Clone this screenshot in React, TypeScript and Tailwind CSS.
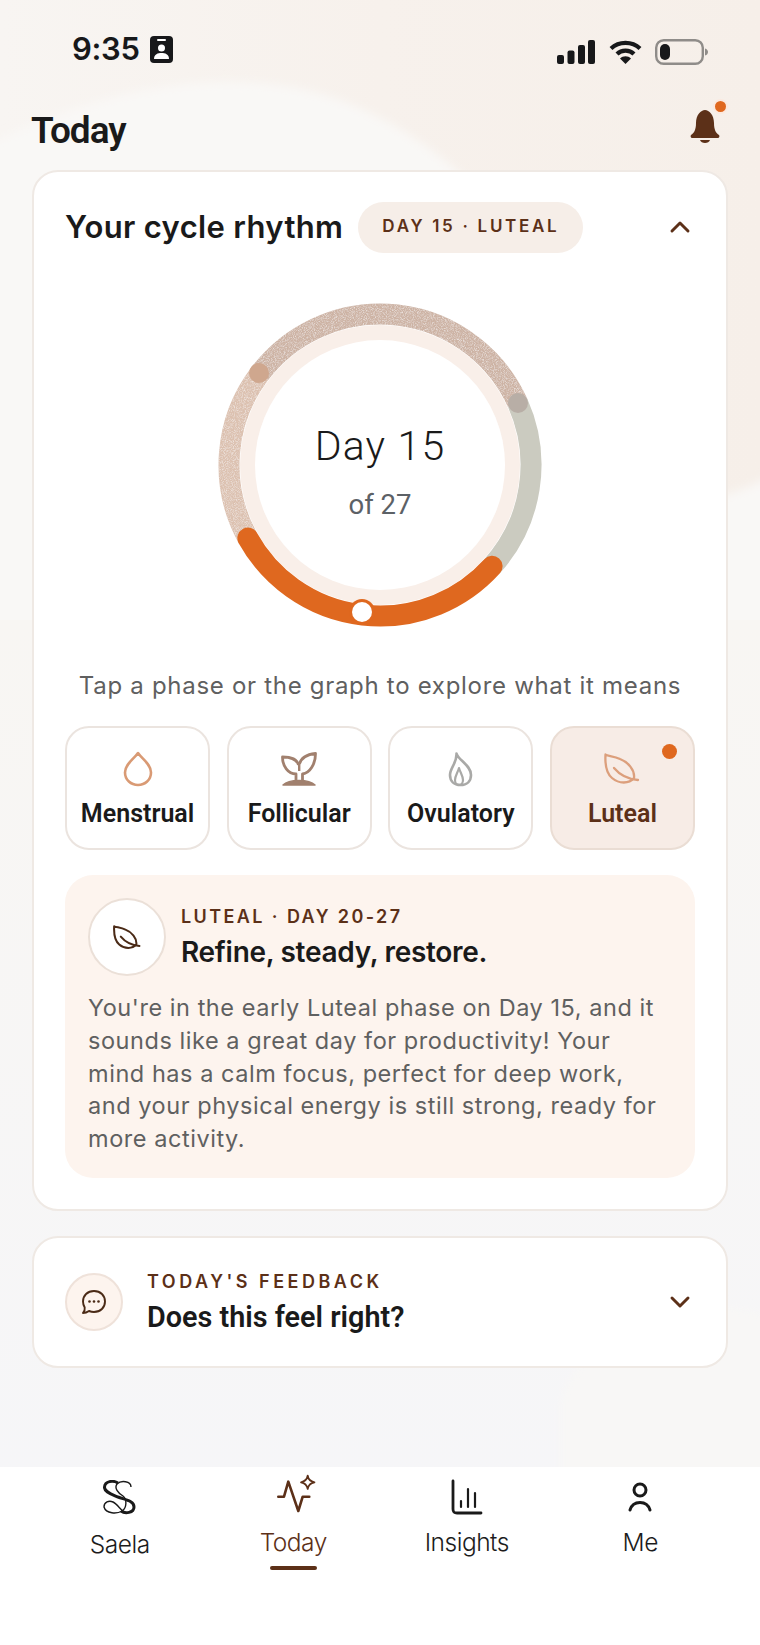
import { ChevronDown, ChevronUp } from "lucide-react";

const BROWN = "#5c3018";
const sans = "font-['Inter','Liberation_Sans',sans-serif]";
const grotesk = "font-['Roboto','Liberation_Sans',sans-serif]";

// point on the ring, x/y are offsets from the centre of the 340 box
const CX = 170;
const CY = 170;
const R = 151;
const norm = (x: number, y: number) => {
  const l = Math.hypot(x, y);
  return [CX + (x / l) * R, CY + (y / l) * R];
};
const arc = (from: [number, number], to: [number, number]) => {
  const a = norm(from[0], from[1]);
  const b = norm(to[0], to[1]);
  return `M${a[0]} ${a[1]}A${R} ${R} 0 0 1 ${b[0]} ${b[1]}`;
};

const Ring = () => (
  <svg width="340" height="340" viewBox="0 0 340 340" className="block">
    <defs>
      <filter id="grain" filterUnits="userSpaceOnUse" x="0" y="0" width="340" height="340">
        <feTurbulence type="fractalNoise" baseFrequency="1.1" numOctaves="2" seed="4" result="n" />
        <feColorMatrix in="n" type="matrix" values="0 0 0 0 1  0 0 0 0 1  0 0 0 0 1  0 0 0 1.2 -0.5" result="w" />
        <feComposite in="w" in2="SourceGraphic" operator="in" result="c" />
        <feMerge>
          <feMergeNode in="SourceGraphic" />
          <feMergeNode in="c" />
        </feMerge>
      </filter>
    </defs>
    <g fill="none">
      <path d={arc([-132, 73], [-121, -92])} stroke="#dcc1b0" strokeWidth="21" filter="url(#grain)" />
      <path d={arc([-121, -92], [138, -62])} stroke="#cdb3a4" strokeWidth="21" filter="url(#grain)" />
      <path d={arc([138, -62], [113, 102])} stroke="#cbcbc0" strokeWidth="21" />
    </g>
    <circle cx={CX} cy={CY} r="140" fill="#f9efe9" />
    <circle cx={CX} cy={CY} r="125" fill="#ffffff" />
    <circle cx="49" cy="78" r="10" fill="#cfa78e" />
    <circle cx="308" cy="108" r="10" fill="#b8aea6" />
    <path d={arc([113, 102], [-132, 73])} fill="none" stroke="#df681f" strokeWidth="21" strokeLinecap="round" />
    <circle cx="152" cy="317" r="13" fill="#df681f" />
    <circle cx="152" cy="317" r="10" fill="#ffffff" />
  </svg>
);

const DropIcon = () => (
  <svg width="32" height="36" viewBox="0 0 32 36" fill="none" stroke="#d99a74" strokeWidth="2.6">
    <path d="M16 2 C12 8 3 13 3 21.500 C3 29 9 34 16 34 C23 34 29 29 29 21.500 C29 13 20 8 16 2Z" strokeLinejoin="round" />
  </svg>
);

const SproutIcon = () => (
  <svg width="36" height="34" viewBox="0 0 36 34" fill="none" stroke="#a1806e" strokeWidth="2.800" strokeLinejoin="round">
    <path d="M15 28 V22 C7 22 1.500 14 1.500 5 C10 5 16 7 17.500 13" />
    <path d="M21.500 28 V22 C29 21 34.500 12 34.500 1.500 C26 2.500 20 6 18.500 12" />
    <path d="M18.200 12 V19" strokeWidth="2.400" />
    <path d="M2 33 C8 27 28 27 34 33 Z" fill="#a1806e" strokeWidth="1.500" />
  </svg>
);

const FlameIcon = () => (
  <svg width="25" height="35" viewBox="0 0 25 35" fill="none" stroke="#a9a9a7" strokeWidth="2.600" strokeLinejoin="round">
    <path d="M8.500 1.500 C10 8 23 13 23 23 C23 29 19 33 12.500 33 C6 33 2 29 2 23 C2 16 9 11 8.500 1.500Z" />
    <path d="M11 16 C12 20 15 24 15 28 C15 31 13 33 11 33 C9 33 7 31 7 28 C7 24 10 20 11 16Z" strokeWidth="2.200" />
  </svg>
);

const LeafIcon = ({ width, color, sw }: { width: number; color: string; sw: number }) => (
  <svg width={width} height={(width * 32) / 36} viewBox="0 0 36 32" fill="none" stroke={color} strokeWidth={sw} strokeLinecap="round" strokeLinejoin="round">
    <path d="M1.500 1.500 C3 3 10 3 16 6 C24 9 31 17 30 25 C25 31 15 31 8 25 C2 20 1 10 1.500 1.500Z" />
    <path d="M10 15 C15 21 22 26 34 27" />
  </svg>
);

type Phase = { name: string; icon: React.ReactNode };
const phases: Phase[] = [
  { name: "Menstrual", icon: <DropIcon /> },
  { name: "Follicular", icon: <SproutIcon /> },
  { name: "Ovulatory", icon: <FlameIcon /> },
  { name: "Luteal", icon: <LeafIcon width={36} color="#dc9f7c" sw={2.3} /> },
];

const PhaseButton = ({ phase, active }: { phase: Phase; active: boolean }) => (
  <div
    className={`relative flex h-[124px] flex-col items-center rounded-[24px] border-2 ${
      active ? "border-[#eaddd4] bg-[#f7ece6]" : "border-[#ebe4df] bg-white"
    }`}
  >
    <div className="mt-[21px] flex h-[40px] items-center justify-center">{phase.icon}</div>
    <span
      className={`${grotesk} mt-[10px] text-[25px] leading-[30px] font-semibold ${
        active ? "text-[#5c3018]" : "text-[#1a1a1a]"
      }`}
    >
      {phase.name}
    </span>
    {active && <span className="absolute top-[16px] right-[16px] h-[15px] w-[15px] rounded-full bg-[#df681f]" />}
  </div>
);

const StatusBar = () => (
  <div className="flex h-[67px] items-end justify-between pr-[52px] pl-[72px]">
    <div className="flex items-center gap-[10px]">
      <span className={`${sans} text-[31px] leading-[36px] font-semibold tracking-[-0.3px] text-[#17181a]`}>9:35</span>
      <svg width="23" height="27" viewBox="0 0 23 27">
        <rect width="23" height="27" rx="4" fill="#17181a" />
        <rect x="7" y="3" width="9" height="2" rx="1" fill="#fff" />
        <circle cx="11.500" cy="12" r="3.500" fill="#fff" />
        <path d="M4 23 C4 18 8 17 11.500 17 C15 17 19 18 19 23Z" fill="#fff" />
      </svg>
    </div>
    <div className="flex items-center gap-[14px] pb-[2px]">
      <svg width="38" height="24" viewBox="0 0 38 24" fill="#17181a">
        <rect y="15" width="7" height="9" rx="2" />
        <rect x="10.500" y="10.500" width="7" height="13.500" rx="2" />
        <rect x="21" y="5" width="7" height="19" rx="2" />
        <rect x="31" y="0" width="7" height="24" rx="2" />
      </svg>
      <svg width="33" height="24" viewBox="0 0 33 24" fill="none" stroke="#17181a" strokeWidth="4.200">
        <path d="M2 8.500 C10 1 23 1 31 8.500" />
        <path d="M8 14 C12.500 9.500 20.500 9.500 25 14" />
        <path d="M16.500 24 L11 18.500 C14 15.500 19 15.500 22 18.500 Z" fill="#17181a" stroke="none" />
      </svg>
      <svg width="53" height="26" viewBox="0 0 53 26" className="-ml-[1px]">
        <rect x="1.200" y="1.200" width="46.600" height="23.600" rx="7.500" fill="none" stroke="#8f8c89" strokeWidth="2.400" />
        <rect x="5" y="5" width="10" height="16" rx="5" fill="#17181a" />
        <path d="M50 9.500 C52 10 53 11.500 53 13 C53 14.500 52 16 50 16.500Z" fill="#8f8c89" />
      </svg>
    </div>
  </div>
);

const NavItem = ({
  label,
  icon,
  active,
  labelClass,
}: {
  label: string;
  icon: React.ReactNode;
  active?: boolean;
  labelClass?: string;
}) => (
  <div className="relative flex w-[174px] flex-col items-center">
    <div className="flex h-[50px] items-center justify-center">{icon}</div>
    <span
      className={`${sans} ${labelClass ?? "mt-[6px]"} text-[24.500px] leading-[28px] font-light tracking-[-0.5px] ${
        active ? "text-[#5c3018]" : "text-[#1c1c1c]"
      }`}
    >
      {label}
    </span>
    {active && <span className="mt-[10px] h-[4px] w-[47px] rounded-full bg-[#5c3018]" />}
  </div>
);

export default function App() {
  return (
    <div className="relative flex h-[1645px] w-[760px] flex-col overflow-hidden bg-[#f6f6f8]">
      {/* soft blobs behind everything */}
      <svg className="absolute inset-0" width="760" height="1645" viewBox="0 0 760 1645">
        <defs>
          <linearGradient id="top" x1="0" y1="0" x2="1" y2="0">
            <stop offset="0" stopColor="#f8f5f2" />
            <stop offset="0.5" stopColor="#f7f1ec" />
            <stop offset="1" stopColor="#f6efe9" />
          </linearGradient>
          <linearGradient id="fade" x1="0" y1="0" x2="0" y2="1">
            <stop offset="0" stopColor="#f8f6f3" />
            <stop offset="1" stopColor="#f6f6f8" />
          </linearGradient>
          <filter id="soft">
            <feGaussianBlur stdDeviation="5" />
          </filter>
        </defs>
        <rect width="760" height="620" fill="url(#top)" />
        <path d="M-20 150 C90 90 230 60 340 100 C450 140 560 250 620 420 C650 500 700 520 780 470 L780 640 L-20 640Z" fill="#f9f8f6" filter="url(#soft)" />
        <rect y="620" width="760" height="860" fill="url(#fade)" />
        <path d="M560 1400 C600 1300 700 1290 780 1320 L780 1480 L560 1480Z" fill="#f8f7f6" filter="url(#soft)" />
      </svg>

      <div className="relative flex flex-1 flex-col">
        <StatusBar />
        <div className="flex h-[103px] items-start justify-between pt-[41px] pr-[40px] pl-[31px]">
          <h1 className={`${grotesk} text-[37px] leading-[46px] font-semibold tracking-[-1px] text-[#1a1a1a]`}>Today</h1>
          <div className="relative mt-[1px] h-[36px] w-[30px]">
            <svg width="30" height="36" viewBox="0 0 30 36" fill={BROWN}>
              <path d="M15 1 C19 1 24 6 24 14 C24 21 26 24 29 26 C30 27 29 29 28 29 L2 29 C1 29 0 27 1 26 C4 24 6 21 6 14 C6 6 11 1 15 1Z" />
              <path d="M10 31 L20 31 C19 35 11 35 10 31Z" />
            </svg>
            <span className="absolute -top-[10px] -right-[8px] h-[15px] w-[15px] rounded-full border-2 border-[#fbe9df] bg-[#df681f]" />
          </div>
        </div>

        {/* cycle card */}
        <section className="mx-[32px] h-[1041px] rounded-[26px] border-2 border-[#efe9e4] bg-white">
          <div className="flex h-[110px] items-center pr-[30px] pl-[31px]">
            <h2 className={`${sans} text-[31px] leading-[36px] font-semibold tracking-[0.35px] text-[#1a1a1a]`}>Your cycle rhythm</h2>
            <span className={`${sans} ml-[15px] flex h-[51px] w-[225px] items-center justify-center rounded-full bg-[#f6eee8] text-[17px] font-semibold tracking-[2.7px] text-[#5c3018]`}>
              DAY 15 · LUTEAL
            </span>
            <ChevronUp className="ml-auto" size={32} strokeWidth={2.2} color={BROWN} />
          </div>

          <div className="relative mx-auto mt-[13px] h-[340px] w-[340px]">
            <Ring />
            <div className="absolute inset-0 flex flex-col items-center pt-[126px]">
              <span className={`${grotesk} text-[41px] leading-[50px] font-light tracking-[1.2px] text-[#1a1a1a]`}>Day 15</span>
              <span className={`${grotesk} mt-[17px] text-[27.500px] leading-[34px] font-normal text-[#5c6166]`}>of 27</span>
            </div>
          </div>

          <p className={`${sans} mt-[35px] text-center text-[24px] leading-[32px] tracking-[0.7px] text-[#5f6060]`}>
            Tap a phase or the graph to explore what it means
          </p>

          <div className="mx-[31px] mt-[24px] grid grid-cols-4 gap-[16.500px]">
            {phases.map((p) => (
              <PhaseButton key={p.name} phase={p} active={p.name === "Luteal"} />
            ))}
          </div>

          <div className="mx-[31px] mt-[25px] h-[303px] rounded-[28px] bg-[#fdf4ee] px-[23px] pt-[23px]">
            <div className="flex items-center gap-[15px]">
              <div className="flex h-[78px] w-[78px] items-center justify-center rounded-full border-2 border-[#ebe0d8] bg-white">
                <LeafIcon width={28} color="#4a2a16" sw={2.6} />
              </div>
              <div className="mt-[1px] flex flex-col">
                <span className={`${sans} text-[18px] leading-[24px] font-semibold tracking-[2.400px] text-[#5c3018]`}>LUTEAL · DAY 20-27</span>
                <span className={`${sans} mt-[5px] text-[28px] leading-[36px] font-semibold tracking-[-0.3px] text-[#1a1a1a]`}>Refine, steady, restore.</span>
              </div>
            </div>
            <p className={`${sans} mt-[16px] text-[23.500px] leading-[32.800px] tracking-[0.55px] whitespace-nowrap text-[#5f6060]`}>
              You're in the early Luteal phase on Day 15, and it
              <br />
              sounds like a great day for productivity! Your
              <br />
              mind has a calm focus, perfect for deep work,
              <br />
              and your physical energy is still strong, ready for
              <br />
              more activity.
            </p>
          </div>
        </section>

        {/* feedback card */}
        <section className="mx-[32px] mt-[25px] flex h-[132px] items-center rounded-[26px] border-2 border-[#efe9e4] bg-white pr-[30px] pl-[31px]">
          <div className="flex h-[58px] w-[58px] items-center justify-center rounded-full border-2 border-[#efe2da] bg-[#fdf4ee]">
            <svg width="26" height="26" viewBox="0 0 26 26" fill="none" stroke="#4a2a16" strokeWidth="1.900" strokeLinejoin="round">
              <path d="M13 2 C19.500 2 24 6.500 24 12.500 C24 18.500 19.500 23 13 23 C11 23 9.500 22.600 8 22 C6 23.400 4 24 2 24 C3.500 22.500 4 20.500 3.700 18.500 C2.600 16.600 2 14.600 2 12.500 C2 6.500 6.500 2 13 2Z" />
              <circle cx="8.500" cy="12.500" r="1.300" fill="#4a2a16" stroke="none" />
              <circle cx="13" cy="12.500" r="1.300" fill="#4a2a16" stroke="none" />
              <circle cx="17.500" cy="12.500" r="1.300" fill="#4a2a16" stroke="none" />
            </svg>
          </div>
          <div className="ml-[24px] flex flex-col">
            <span className={`${sans} text-[18px] leading-[24px] font-semibold tracking-[3.500px] text-[#5c3018]`}>TODAY'S FEEDBACK</span>
            <span className={`${grotesk} mt-[5px] text-[28.800px] leading-[36px] font-semibold text-[#1a1a1a]`}>Does this feel right?</span>
          </div>
          <ChevronDown className="ml-auto" size={32} strokeWidth={2.2} color={BROWN} />
        </section>

        {/* bottom nav */}
        <nav className="mt-auto flex h-[178px] justify-center bg-white px-[33px] pt-[5px]">
          <NavItem
            label="Saela"
            labelClass="mt-[8px]"
            icon={
              <svg width="33" height="35" viewBox="0 0 33 35" fill="none" stroke="#1a1a1a">
                <path d="M15 3 C10 0 2 1 1.500 7 C1 12 8 14 15 17 C23 20 31 21 31 27 C31 33 22 34 18 31" strokeWidth="3" />
                <path d="M28 7 C28 1 18 0 14 4 C11 8 15 13 20 16 C24 19 24 28 19 31 C14 34 3 34 1 27 C1 22 6 20 10 22 C14 24 17 29 21 32" strokeWidth="1.400" />
              </svg>
            }
          />
          <NavItem
            label="Today"
            active
            icon={
              <svg width="42" height="46" viewBox="0 0 42 46" className="overflow-visible" fill="none" stroke={BROWN} strokeWidth="2.600" strokeLinejoin="round" strokeLinecap="round">
                <path d="M6.300 22.700 H12 L16.300 7.700 L26.300 37 L30.700 22.700 H37.300" />
                <path d="M35.700 1.500 C36.300 5.500 38 7.500 42.500 8.300 C38 9 36.300 11 35.700 15 C35 11 33.300 9 29 8.300 C33.300 7.500 35 5.500 35.700 1.500Z" strokeWidth="1.700" />
              </svg>
            }
          />
          <NavItem
            label="Insights"
            icon={
              <svg width="32" height="36" viewBox="0 0 32 36" fill="none" stroke="#1a1a1a" strokeWidth="2.800" strokeLinecap="round">
                <path d="M2 2 V30 C2 33 3 34 6 34 H30" />
                <path d="M10 22 V28" strokeWidth="2.200" />
                <path d="M17 10 V28" strokeWidth="2.200" />
                <path d="M24 14 V28" strokeWidth="2.200" />
              </svg>
            }
          />
          <NavItem
            label="Me"
            icon={
              <svg width="24" height="30" viewBox="0 0 24 30" fill="none" stroke="#1a1a1a" strokeWidth="3" strokeLinecap="round">
                <circle cx="12" cy="8" r="6" />
                <path d="M2 28 C3.500 23 7 20.500 12 20.500 C17 20.500 20.500 23 22 28" />
              </svg>
            }
          />
        </nav>
      </div>
    </div>
  );
}
